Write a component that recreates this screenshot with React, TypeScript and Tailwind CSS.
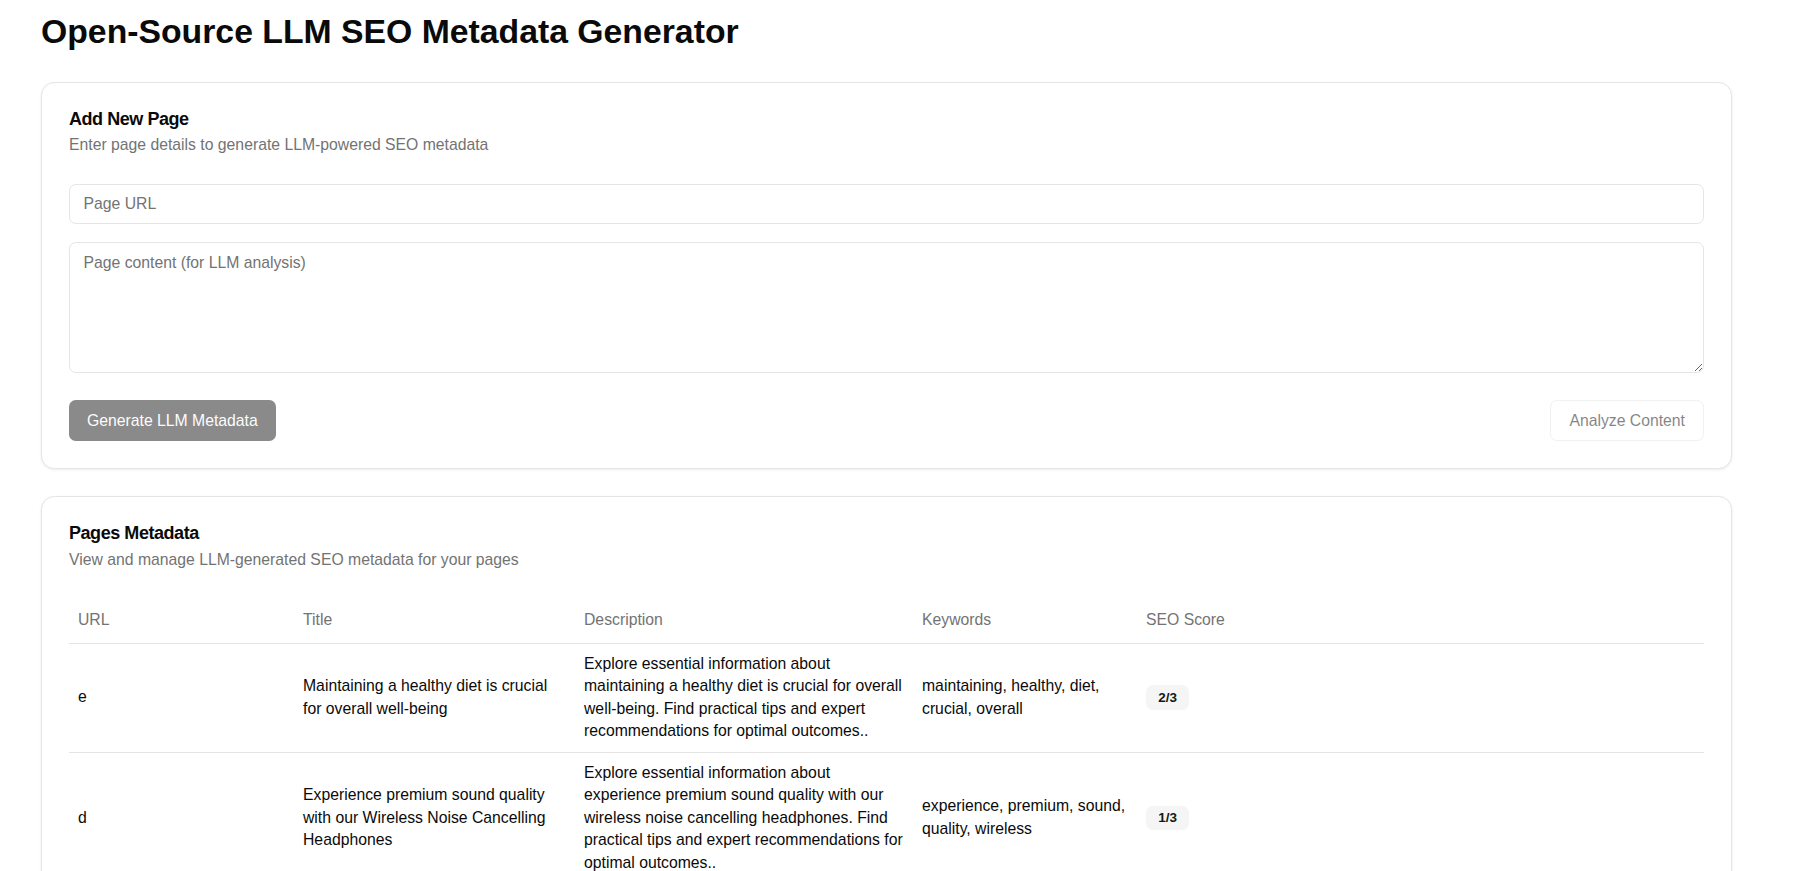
import { useState } from "react";

type PageMeta = {
  url: string;
  title: string;
  description: string;
  keywords: string;
  score: string;
};

const pages: PageMeta[] = [
  {
    url: "e",
    title: "Maintaining a healthy diet is crucial for overall well-being",
    description:
      "Explore essential information about maintaining a healthy diet is crucial for overall well-being. Find practical tips and expert recommendations for optimal outcomes..",
    keywords: "maintaining, healthy, diet, crucial, overall",
    score: "2/3",
  },
  {
    url: "d",
    title: "Experience premium sound quality with our Wireless Noise Cancelling Headphones",
    description:
      "Explore essential information about experience premium sound quality with our wireless noise cancelling headphones. Find practical tips and expert recommendations for optimal outcomes..",
    keywords: "experience, premium, sound, quality, wireless",
    score: "1/3",
  },
];

export default function App() {
  const [url, setUrl] = useState("");
  const [content, setContent] = useState("");
  const disabled = !url || !content;

  return (
    <div className="min-h-screen bg-white pl-[41px] pr-[68px] pt-[11px] pb-10 font-['Liberation_Sans',Arial,sans-serif] text-[#0a0a0a]">
      <h1 className="text-[33.75px] leading-[40.5px] font-bold mb-[30px]">
        Open-Source LLM SEO Metadata Generator
      </h1>

      <div className="flex flex-col gap-[27px]">
        {/* Add page card */}
        <div className="rounded-[13.5px] border border-[#e5e5e5] bg-white shadow-[0_1px_3px_rgba(0,0,0,0.08)]">
          <div className="p-[27px] flex flex-col gap-[6.75px]">
            <h2 className="text-[18px] leading-[18px] font-semibold tracking-[-0.45px]">
              Add New Page
            </h2>
            <p className="text-[15.75px] leading-[22.5px] text-[#737373]">
              Enter page details to generate LLM-powered SEO metadata
            </p>
          </div>
          <div className="px-[27px] pb-[27px] flex flex-col">
            <input
              value={url}
              onChange={(e) => setUrl(e.target.value)}
              placeholder="Page URL"
              className="h-[40.5px] w-full rounded-[6.75px] border border-[#e5e5e5] px-[13.5px] text-[15.75px] placeholder:text-[#737373] outline-none"
            />
            <textarea
              value={content}
              onChange={(e) => setContent(e.target.value)}
              placeholder="Page content (for LLM analysis)"
              className="mt-[18px] h-[131px] w-full rounded-[6.75px] border border-[#e5e5e5] px-[13.5px] py-[9px] text-[15.75px] leading-[22.5px] placeholder:text-[#737373] outline-none"
            />
            <div className="mt-[27px] flex items-center justify-between">
              <button
                disabled={disabled}
                className="h-[40.5px] px-[18px] rounded-[6.75px] bg-[#171717] text-[#fafafa] text-[15.75px] font-medium disabled:opacity-50"
              >
                Generate LLM Metadata
              </button>
              <button
                disabled={disabled}
                className="h-[40.5px] px-[18px] rounded-[6.75px] border border-[#e5e5e5] bg-white text-[15.75px] font-medium disabled:opacity-50"
              >
                Analyze Content
              </button>
            </div>
          </div>
        </div>

        {/* Pages table card */}
        <div className="rounded-[13.5px] border border-[#e5e5e5] bg-white shadow-[0_1px_3px_rgba(0,0,0,0.08)]">
          <div className="p-[27px] flex flex-col gap-[6.75px]">
            <h2 className="text-[18px] leading-[18px] font-semibold tracking-[-0.45px]">
              Pages Metadata
            </h2>
            <p className="text-[15.75px] leading-[22.5px] text-[#737373]">
              View and manage LLM-generated SEO metadata for your pages
            </p>
          </div>
          <div className="px-[27px] pb-[27px]">
            <table className="w-full table-fixed text-[15.75px] leading-[22.5px]">
              <colgroup>
                <col className="w-[225px]" />
                <col className="w-[281px]" />
                <col className="w-[338px]" />
                <col className="w-[224px]" />
                <col />
              </colgroup>
              <thead>
                <tr className="border-b border-[#e5e5e5]">
                  <th className="h-[45px] px-[9px] text-left align-middle font-medium text-[#737373]">URL</th>
                  <th className="h-[45px] px-[9px] text-left align-middle font-medium text-[#737373]">Title</th>
                  <th className="h-[45px] px-[9px] text-left align-middle font-medium text-[#737373]">Description</th>
                  <th className="h-[45px] px-[9px] text-left align-middle font-medium text-[#737373]">Keywords</th>
                  <th className="h-[45px] px-[9px] text-left align-middle font-medium text-[#737373]">SEO Score</th>
                </tr>
              </thead>
              <tbody>
                {pages.map((p) => (
                  <tr key={p.url} className="border-b border-[#e5e5e5]">
                    <td className="p-[9px] align-middle">{p.url}</td>
                    <td className="p-[9px] align-middle">{p.title}</td>
                    <td className="p-[9px] align-middle">{p.description}</td>
                    <td className="p-[9px] align-middle">{p.keywords}</td>
                    <td className="p-[9px] align-middle">
                      <span className="inline-flex items-center rounded-[6.75px] border border-transparent bg-[#f5f5f5] px-[11.25px] py-[2.25px] text-[13.5px] leading-[18px] font-semibold text-[#171717]">
                        {p.score}
                      </span>
                    </td>
                  </tr>
                ))}
              </tbody>
            </table>
          </div>
        </div>
      </div>
    </div>
  );
}
